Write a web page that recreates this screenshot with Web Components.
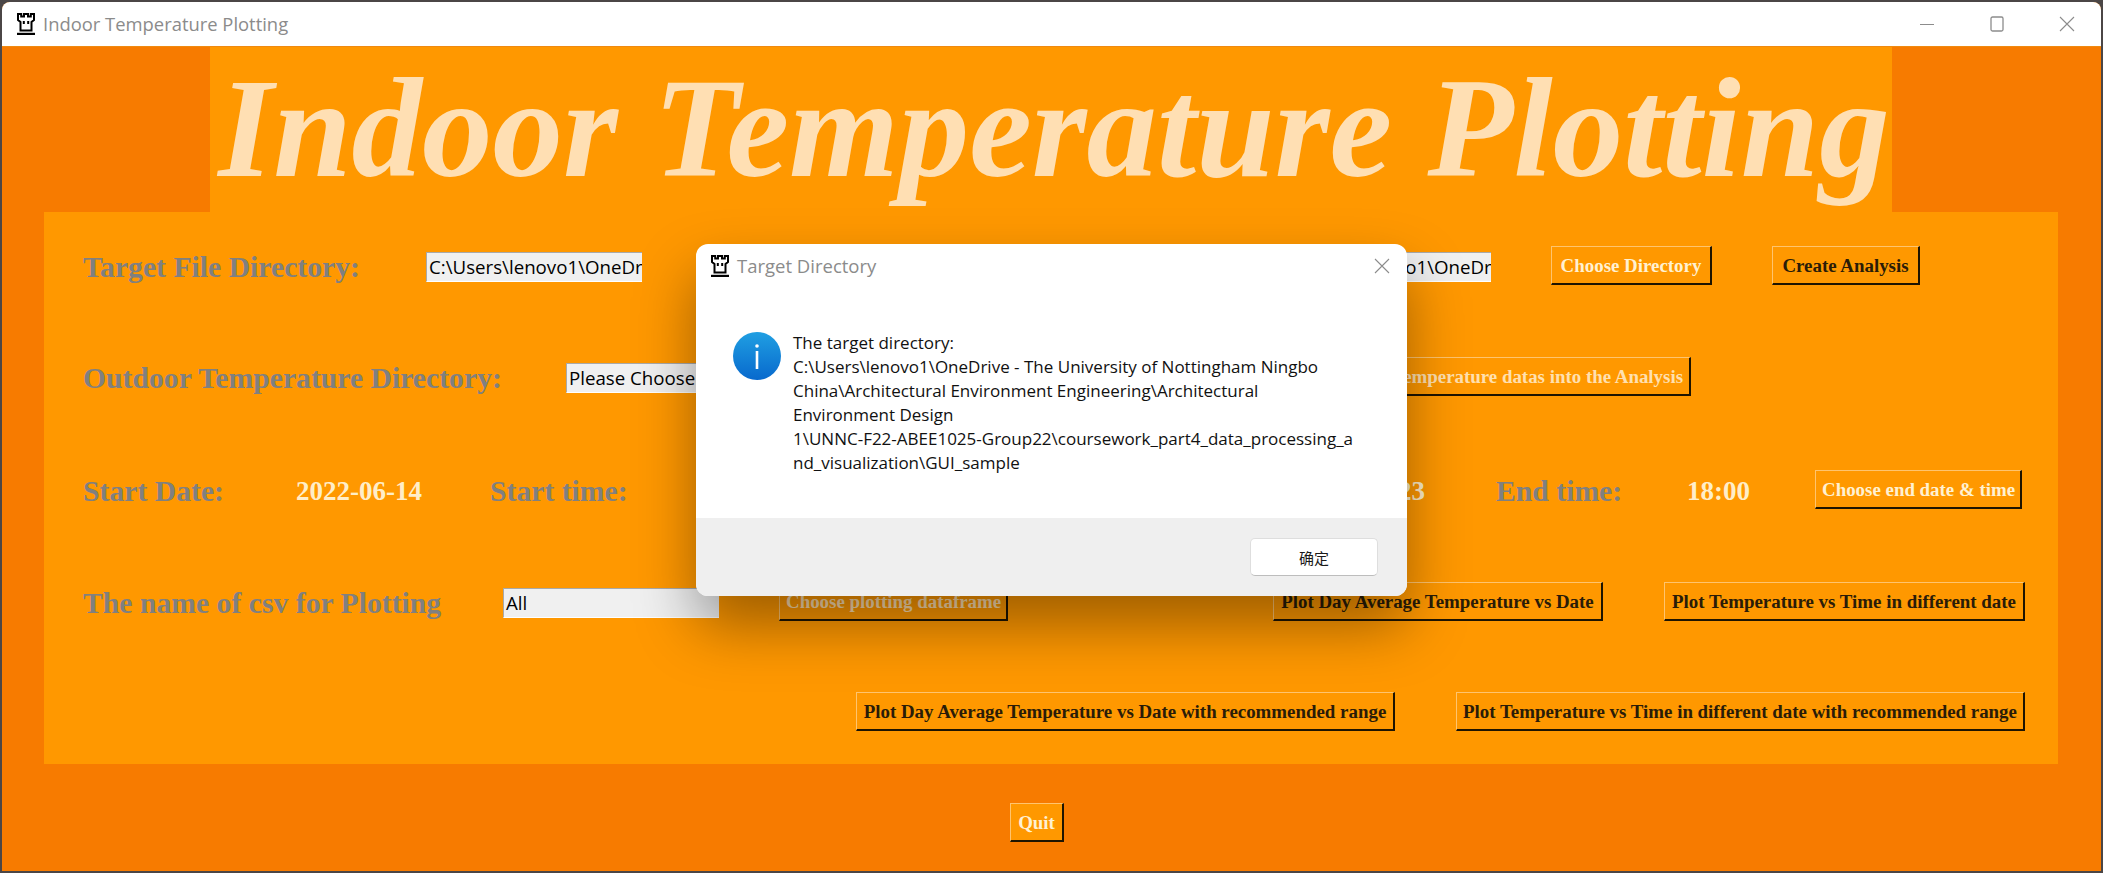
<!DOCTYPE html>
<html>
<head>
<meta charset="utf-8">
<title>Indoor Temperature Plotting</title>
<style>
  html, body { margin: 0; height: 100%; overflow: hidden; background: #4b4646; }
  body { padding: 2px; box-sizing: border-box; }
</style>
</head>
<body>
<temp-window>
  <temp-heading>Indoor Temperature Plotting</temp-heading>

  <temp-panel>
    <form-row style="margin-top:34px">
      <field-label style="width:343px">Target File Directory:</field-label>
      <text-entry>C:\Users\lenovo1\OneDr</text-entry>
      <text-entry style="margin-left:633px">C:\Users\lenovo1\OneDr</text-entry>
      <relief-button tone="light" style="margin-left:60px;width:161px">Choose Directory</relief-button>
      <relief-button style="margin-left:60px;width:148px">Create Analysis</relief-button>
    </form-row>

    <form-row style="margin-top:72px">
      <field-label style="width:483px">Outdoor Temperature Directory:</field-label>
      <text-entry>Please Choose</text-entry>
      <relief-button tone="pale" align="right" style="margin-left:538px;width:371px">Temperature datas into the Analysis</relief-button>
    </form-row>

    <form-row style="margin-top:74px">
      <field-label style="width:213px">Start Date:</field-label>
      <field-value style="width:194px">2022-06-14</field-value>
      <field-label style="width:136px">Start time:</field-label>
      <field-value style="width:197px;margin-left:673px">2022-06-23</field-value>
      <field-label style="width:191px">End time:</field-label>
      <field-value style="width:128px">18:00</field-value>
      <relief-button tone="light" style="width:207px">Choose end date &amp; time</relief-button>
    </form-row>

    <form-row style="margin-top:73px">
      <field-label style="width:420px">The name of csv for Plotting</field-label>
      <text-entry>All</text-entry>
      <relief-button tone="pale" style="margin-left:60px;width:229px">Choose plotting dataframe</relief-button>
      <relief-button style="margin-left:265px;width:330px">Plot Day Average Temperature vs Date</relief-button>
      <relief-button style="margin-left:61px;width:361px">Plot Temperature vs Time in different date</relief-button>
    </form-row>

    <form-row style="margin-top:71px;padding-left:773px">
      <relief-button style="width:539px">Plot Day Average Temperature vs Date with recommended range</relief-button>
      <relief-button style="margin-left:61px;width:569px">Plot Temperature vs Time in different date with recommended range</relief-button>
    </form-row>
  </temp-panel>

  <relief-button slot="footer" tone="light" style="width:54px">Quit</relief-button>

  <message-box slot="overlay" caption="Target Directory">
    The target directory:<br>
    C:\Users\lenovo1\OneDrive - The University of Nottingham Ningbo<br>
    China\Architectural Environment Engineering\Architectural<br>
    Environment Design<br>
    1\UNNC-F22-ABEE1025-Group22\coursework_part4_data_processing_a<br>
    nd_visualization\GUI_sample
  </message-box>
</temp-window>

<script>
// same little tower is used by the main window and the message box
const towerIcon = `
  <svg width="18" height="22" viewBox="0 0 18 22" style="flex:none">
    <path fill="#fff" stroke="#000" stroke-width="2" d="M1 1h3.200v2.500h2.800V1h4v2.500h2.800V1H17v6l-2.500 2v8.500h-11V9L1 7z"/>
    <rect x="5.800" y="8" width="2" height="3" fill="#000"/>
    <rect x="10.200" y="8" width="2" height="3" fill="#000"/>
    <rect x="0" y="19.800" width="18" height="2.200" fill="#000"/>
  </svg>`;

class TempWindow extends HTMLElement {
  constructor() {
    super();
    this.attachShadow({ mode: "open" });
    this.shadowRoot.innerHTML = `
      <style>
        :host { display: block; position: relative; width: 2099px; height: 869px; background: #f77b00; border-radius: 8px 8px 0 0; overflow: hidden; }
        header { display: flex; align-items: center; height: 45px; box-sizing: border-box; background: #fff; border-bottom: 1px solid #f08a10; padding-left: 15px; }
        .name { margin-left: 8px; font: 18.400px/1 "Open Sans", "Noto Sans", sans-serif; color: #8b8b8b; white-space: nowrap; flex: 1; }
        .ctl { display: flex; width: 182px; flex: none; align-items: center; }
        .ctl svg { display: block; }
        footer { padding: 39px 0 0 1008px; }
      </style>
      <header>
        ${towerIcon}
        <span class="name">Indoor Temperature Plotting</span>
        <span class="ctl">
          <svg width="16" height="16" viewBox="0 0 16 16"><path d="M1 8.500h14" stroke="#8c8c8c" stroke-width="1.200"/></svg>
          <svg style="margin-left:54px" width="16" height="16" viewBox="0 0 16 16"><rect x="2" y="1" width="12" height="14" rx="1.500" fill="none" stroke="#8c8c8c" stroke-width="1.300"/></svg>
          <svg style="margin-left:54px" width="16" height="16" viewBox="0 0 16 16"><path d="M1 1l14 14M15 1L1 15" stroke="#8c8c8c" stroke-width="1.100"/></svg>
        </span>
      </header>
      <slot></slot>
      <footer><slot name="footer"></slot></footer>
      <slot name="overlay"></slot>`;
  }
}

class TempHeading extends HTMLElement {
  constructor() {
    super();
    this.attachShadow({ mode: "open" });
    this.shadowRoot.innerHTML = `
      <style>
        :host { display: block; height: 165px; margin: 0 209px 0 208px; padding-left: 6px; background: #ff9800; color: #ffdfb3; overflow: hidden; text-align: center; white-space: nowrap;
          font: italic bold 141px/162px "Liberation Serif", serif; }
      </style>
      <slot></slot>`;
  }
}

class TempPanel extends HTMLElement {
  constructor() {
    super();
    this.attachShadow({ mode: "open" });
    this.shadowRoot.innerHTML = `
      <style>
        :host { display: block; height: 552px; margin: 0 43px 0 42px; padding-left: 39px; background: #ff9800; overflow: hidden; }
      </style>
      <slot></slot>`;
  }
}

class FormRow extends HTMLElement {
  constructor() {
    super();
    this.attachShadow({ mode: "open" });
    this.shadowRoot.innerHTML = `
      <style>
        :host { display: flex; align-items: center; height: 39px; white-space: nowrap; }
      </style>
      <slot></slot>`;
  }
}

class FieldLabel extends HTMLElement {
  constructor() {
    super();
    this.attachShadow({ mode: "open" });
    this.shadowRoot.innerHTML = `
      <style>
        :host { display: block; flex: none; margin-top: 3px; color: #808080; font: bold 29.700px/36px "Liberation Serif", serif; }
      </style>
      <slot></slot>`;
  }
}

class FieldValue extends HTMLElement {
  constructor() {
    super();
    this.attachShadow({ mode: "open" });
    this.shadowRoot.innerHTML = `
      <style>
        :host { display: block; flex: none; margin-top: 3px; color: #ffeec8; font: bold 27px/36px "Liberation Serif", serif; }
      </style>
      <slot></slot>`;
  }
}

class TextEntry extends HTMLElement {
  constructor() {
    super();
    this.attachShadow({ mode: "open" });
    this.shadowRoot.innerHTML = `
      <style>
        :host { display: block; flex: none; box-sizing: border-box; width: 216px; height: 30px; margin-top: 3px; padding-left: 2px; overflow: hidden;
          background: #f0f0f0; color: #000; border: solid; border-width: 1px 0 1px 1px; border-color: #a9a9a9 #f0f0f0 #fff #a9a9a9;
          font: 18.700px/27px "Open Sans", "Noto Sans", sans-serif; }
      </style>
      <slot></slot>`;
  }
}

class ReliefButton extends HTMLElement {
  constructor() {
    super();
    this.attachShadow({ mode: "open" });
    this.shadowRoot.innerHTML = `
      <style>
        :host { display: block; flex: none; box-sizing: border-box; height: 39px; padding: 0 6px; background: #ff9800; color: #2a1c08; text-align: center; overflow: hidden;
          border: solid; border-width: 1px 2px 2px 1px; border-color: #ffc46e #1e1400 #1e1400 #ffc46e;
          font: bold 18.900px/37px "Liberation Serif", serif; }
        :host([tone="light"]) { color: #fff1d2; }
        :host([tone="pale"]) { color: #ffe0b0; }
        :host([align="right"]) { text-align: right; }
      </style>
      <slot></slot>`;
  }
}

class MessageBox extends HTMLElement {
  constructor() {
    super();
    this.attachShadow({ mode: "open" });
    this.shadowRoot.innerHTML = `
      <style>
        :host { display: flex; flex-direction: column; position: absolute; left: 694px; top: 242px; width: 711px; height: 352px; overflow: hidden; background: #fff; border-radius: 12px;
          box-shadow: 0 30px 60px rgba(0,0,0,.38); }
        .bar { display: flex; align-items: center; height: 44px; padding: 0 17px 0 15px; }
        .cap { flex: 1; margin-left: 8px; font: 18.500px/1 "Open Sans", "Noto Sans", sans-serif; color: #8b8b8b; }
        .body { display: flex; flex: 1; padding: 44px 0 0 37px; }
        .msg { margin: 0 0 0 12px; font: 17px/24px "Open Sans", "Noto Sans", sans-serif; color: #111; white-space: nowrap; position: relative; top: -1px; }
        .foot { display: flex; justify-content: flex-end; align-items: flex-start; height: 78px; box-sizing: border-box; padding: 20px 29px 0 0; background: #efefef; }
        button { width: 128px; height: 38px; background: #fff; border: 1px solid #dedede; border-bottom-color: #bdbdbd; border-radius: 5px; color: #1a1a1a; font: 15px "Noto Sans CJK SC", "Noto Sans", sans-serif; padding: 0; }
      </style>
      <div class="bar">
        ${towerIcon}
        <span class="cap">${this.getAttribute("caption") || ""}</span>
        <svg width="16" height="16" viewBox="0 0 16 16"><path d="M1 1l14 14M15 1L1 15" stroke="#8c8c8c" stroke-width="1.100"/></svg>
      </div>
      <div class="body">
        <svg width="48" height="48" viewBox="0 0 48 48" style="flex:none">
          <defs><linearGradient id="g" x1="0" y1="0" x2="0" y2="1"><stop offset="0" stop-color="#209fe2"/><stop offset="1" stop-color="#0869cd"/></linearGradient></defs>
          <circle cx="24" cy="24" r="24" fill="url(#g)"/>
          <circle cx="24" cy="14" r="1.800" fill="#fff"/>
          <rect x="22.700" y="19" width="2.600" height="18" fill="#fff"/>
        </svg>
        <p class="msg"><slot></slot></p>
      </div>
      <div class="foot"><button>确定</button></div>`;
  }
}

window.customElements.define("temp-window", TempWindow);
window.customElements.define("temp-heading", TempHeading);
window.customElements.define("temp-panel", TempPanel);
window.customElements.define("form-row", FormRow);
window.customElements.define("field-label", FieldLabel);
window.customElements.define("field-value", FieldValue);
window.customElements.define("text-entry", TextEntry);
window.customElements.define("relief-button", ReliefButton);
window.customElements.define("message-box", MessageBox);
</script>
</body>
</html>
